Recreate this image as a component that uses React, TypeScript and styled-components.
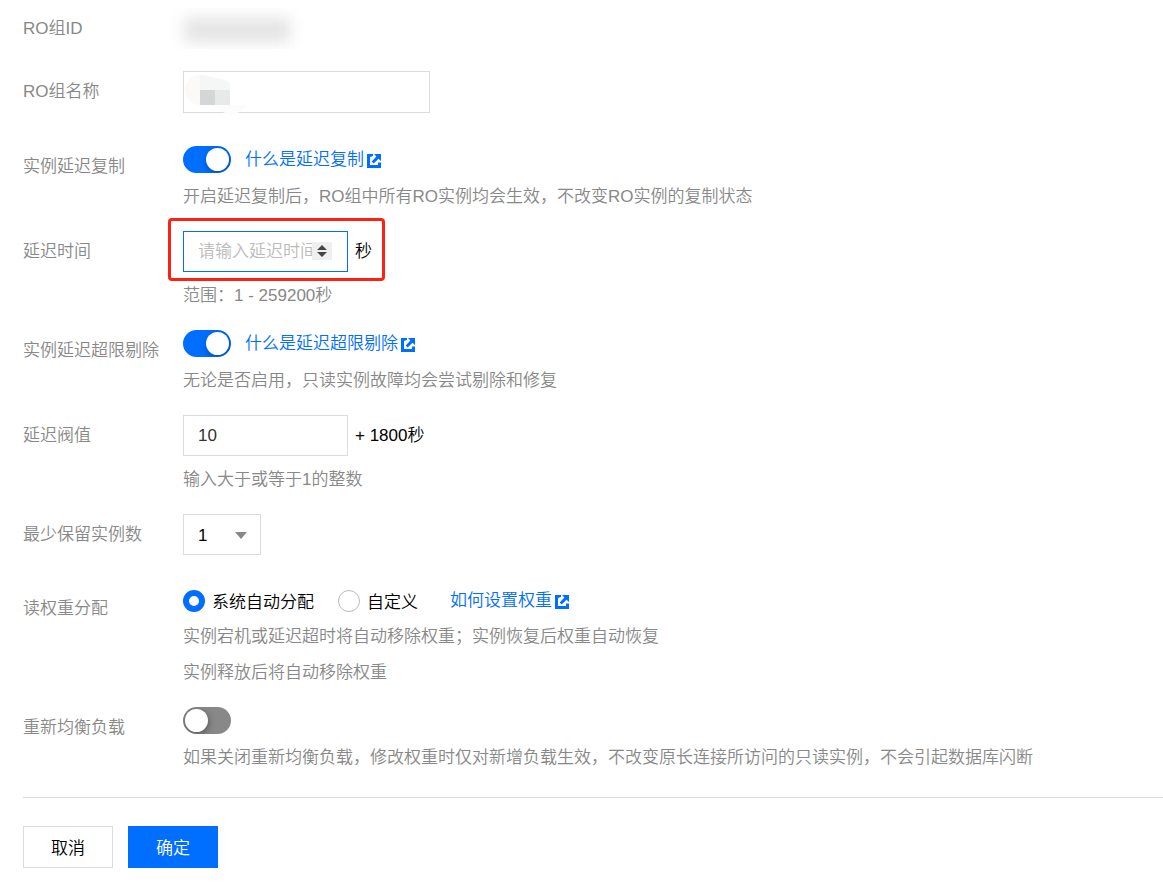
import React, { useState } from "react";
import styled, { createGlobalStyle, css } from "styled-components";

const blue = "#006eff";
const line = "#dcdcdc";
const grey = "#888888";

const GlobalStyle = createGlobalStyle`
  *, *::before, *::after { box-sizing: border-box; }
  body {
    margin: 0;
    background: #ffffff;
    color: #000000;
    font: 350 17px/24px "Liberation Sans", "Noto Sans CJK SC", sans-serif;
  }
  input, select, button { font: inherit; color: inherit; margin: 0; border-radius: 0; }
`;

const Form = styled.form`
  padding: 8px 0 21px 23px;
`;

const Field = styled.div`
  display: grid;
  grid-template-columns: 160px 1fr;
  margin-bottom: 22px;
`;

const Label = styled.label`
  padding-top: 9px;
  color: ${grey};
`;

const Content = styled.div<{ $plain?: boolean }>`
  display: flex;
  flex-direction: column;
  align-items: flex-start;
  gap: 12px;
  padding-bottom: ${(p) => (p.$plain ? 11 : 0)}px;
`;

const Controls = styled.div<{ $gap?: number }>`
  position: relative;
  display: flex;
  align-items: center;
  gap: ${(p) => p.$gap ?? 7}px;
`;

const Hints = styled.div`
  display: flex;
  flex-direction: column;
  gap: 12px;
`;

const Hint = styled.p`
  margin: 0;
  color: ${grey};
`;

const HiddenId = styled.div`
  width: 134px;
  height: 41px;
  margin-left: -13px;
  padding: 10px 14px;
  overflow: hidden;
  &::before {
    content: "";
    display: block;
    height: 24px;
    background: #e3e3e3;
    filter: blur(8px);
  }
`;

const TextInput = styled.input<{ $wide?: boolean; $active?: boolean }>`
  width: ${(p) => (p.$wide ? 247 : 165)}px;
  height: ${(p) => (p.$wide ? 42 : 41)}px;
  padding: 0 14px;
  border: 1px solid ${(p) => (p.$active ? blue : line)};
  background: #ffffff;
  color: #333333;
  outline: none;
  appearance: textfield;
  &::-webkit-inner-spin-button { appearance: none; margin: 0; }
  &::placeholder { color: #bbbbbb; opacity: 1; }
`;

const NumberBox = styled.div`
  position: relative;
  display: flex;
`;

const Spinner = styled.svg`
  position: absolute;
  top: 11px;
  right: 16px;
`;

const Mask = styled.svg`
  position: absolute;
  top: 4px;
  left: 1px;
  pointer-events: none;
`;

const Highlight = styled.div`
  position: absolute;
  inset: -13px -13px -9px -15px;
  border: 3px solid #ff2014;
  border-radius: 4px;
  pointer-events: none;
`;

const SwitchInput = styled.input`
  appearance: none;
  position: relative;
  width: 48px;
  height: 27px;
  border-radius: 14px;
  background: ${grey};
  cursor: pointer;
  overflow: hidden;
  &::before {
    content: "";
    position: absolute;
    top: 2px;
    left: 2px;
    width: 23px;
    height: 23px;
    border-radius: 50%;
    background: #ffffff;
    box-shadow: 1px 2px 6px rgba(0, 0, 0, 0.35);
  }
  &:checked { background: ${blue}; }
  &:checked::before { left: 23px; }
`;

const Link = styled.a`
  display: inline-flex;
  align-items: center;
  gap: 3px;
  color: ${blue};
  text-decoration: none;
`;

const LinkIcon = styled.svg`
  margin-top: 2px;
`;

const SelectBox = styled.div`
  position: relative;
  display: flex;
`;

const Select = styled.select`
  appearance: none;
  width: 78px;
  height: 41px;
  padding: 2px 14px 0;
  border: 1px solid ${line};
  background: #ffffff;
  outline: none;
`;

const Caret = styled.svg`
  position: absolute;
  top: 18px;
  right: 14px;
  pointer-events: none;
`;

const RadioRow = styled.div`
  display: flex;
  align-items: center;
  height: 25px;
`;

const RadioLabel = styled.label<{ $last?: boolean }>`
  display: flex;
  align-items: center;
  gap: 7px;
  margin-right: ${(p) => (p.$last ? 32 : 24)}px;
`;

const RadioText = styled.span`
  padding-top: 4px;
`;

const Radio = styled.input`
  appearance: none;
  width: 22px;
  height: 22px;
  border: 1px solid #bbbbbb;
  border-radius: 50%;
  background: #ffffff;
  &:checked { border: 6px solid ${blue}; }
`;

const Actions = styled.div`
  display: flex;
  gap: 15px;
  margin-top: 27px;
  padding-top: 28px;
  border-top: 1px solid ${line};
`;

const buttonColors = {
  plain: css`background: #ffffff; border-color: ${line};`,
  primary: css`background: ${blue}; border-color: ${blue}; color: #ffffff;`,
};

const Button = styled.button<{ $kind: "plain" | "primary" }>`
  height: 42px;
  padding: 4px 27px 0;
  border: 1px solid;
  cursor: pointer;
  ${(p) => buttonColors[p.$kind]}
`;

function HelpLink({ children }: { children: string }) {
  return (
    <Link href="#">
      {children}
      <LinkIcon width="14" height="14" viewBox="0 0 14 14" aria-hidden="true">
        <path d="M0 0H6V2L3 3V11H11V8.5H14V14H0Z" fill={blue} />
        <path d="M7 0H14V7L11.5 4.8L6.7 9.4L4.7 7.4L9.4 2.6Z" fill={blue} />
      </LinkIcon>
    </Link>
  );
}

function Switch({ id, on }: { id: string; on?: boolean }) {
  const [checked, setChecked] = useState(!!on);
  return <SwitchInput id={id} type="checkbox" role="switch" checked={checked} onChange={() => setChecked(!checked)} />;
}

export default function App() {
  return (
    <>
      <GlobalStyle />
      <Form onSubmit={(e) => e.preventDefault()}>
        <Field>
          <Label as="span">RO组ID</Label>
          <HiddenId />
        </Field>
        <Field>
          <Label htmlFor="name">RO组名称</Label>
          <Content $plain>
            <Controls>
              <TextInput id="name" type="text" $wide />
              <Mask width="64" height="40" aria-hidden="true">
                <path d="M16 0A15 15 0 0 0 16 30Z" fill="#fbfaf9" />
                <path d="M16 0Q24 0 32 3Q42 4 46 8V15H16Z" fill="#f5f7f7" />
                <path d="M16 15H31V30H16Z" fill="#d5d6d8" />
                <path d="M31 15H46V30H31Z" fill="#e8eaea" />
                <path d="M28 30H62Q57 39 47 39Q39 39 28 30Z" fill="#fcfcfc" />
              </Mask>
            </Controls>
          </Content>
        </Field>
        <Field>
          <Label htmlFor="replication">实例延迟复制</Label>
          <Content>
            <Controls $gap={14}>
              <Switch id="replication" on />
              <HelpLink>什么是延迟复制</HelpLink>
            </Controls>
            <Hint>开启延迟复制后，RO组中所有RO实例均会生效，不改变RO实例的复制状态</Hint>
          </Content>
        </Field>
        <Field>
          <Label htmlFor="delay">延迟时间</Label>
          <Content>
            <Controls>
              <NumberBox>
                <TextInput id="delay" type="number" placeholder="请输入延迟时间" $active />
                <Spinner width="20" height="18" aria-hidden="true">
                  <path d="M0 0H20V18H0Z" fill="#efefef" />
                  <path d="M10 3L15 8H5ZM10 15L15 10H5Z" fill="#444" />
                </Spinner>
              </NumberBox>
              <span>秒</span>
              <Highlight />
            </Controls>
            <Hint>范围：1 - 259200秒</Hint>
          </Content>
        </Field>
        <Field>
          <Label htmlFor="eject">实例延迟超限剔除</Label>
          <Content>
            <Controls $gap={14}>
              <Switch id="eject" on />
              <HelpLink>什么是延迟超限剔除</HelpLink>
            </Controls>
            <Hint>无论是否启用，只读实例故障均会尝试剔除和修复</Hint>
          </Content>
        </Field>
        <Field>
          <Label htmlFor="threshold">延迟阀值</Label>
          <Content>
            <Controls>
              <TextInput id="threshold" type="text" defaultValue="10" />
              <span>+ 1800秒</span>
            </Controls>
            <Hint>输入大于或等于1的整数</Hint>
          </Content>
        </Field>
        <Field>
          <Label htmlFor="minimum">最少保留实例数</Label>
          <Content $plain>
            <SelectBox>
              <Select id="minimum" defaultValue="1">
                <option>1</option>
              </Select>
              <Caret width="12" height="7" aria-hidden="true">
                <path d="M0 0H12L6 7Z" fill={grey} />
              </Caret>
            </SelectBox>
          </Content>
        </Field>
        <Field role="radiogroup" aria-labelledby="weight">
          <Label as="span" id="weight">读权重分配</Label>
          <Content>
            <RadioRow>
              <RadioLabel>
                <Radio type="radio" name="weight" defaultChecked />
                <RadioText>系统自动分配</RadioText>
              </RadioLabel>
              <RadioLabel $last>
                <Radio type="radio" name="weight" />
                <RadioText>自定义</RadioText>
              </RadioLabel>
              <HelpLink>如何设置权重</HelpLink>
            </RadioRow>
            <Hints>
              <Hint>实例宕机或延迟超时将自动移除权重；实例恢复后权重自动恢复</Hint>
              <Hint>实例释放后将自动移除权重</Hint>
            </Hints>
          </Content>
        </Field>
        <Field>
          <Label htmlFor="rebalance">重新均衡负载</Label>
          <Content>
            <Controls>
              <Switch id="rebalance" />
            </Controls>
            <Hint>如果关闭重新均衡负载，修改权重时仅对新增负载生效，不改变原长连接所访问的只读实例，不会引起数据库闪断</Hint>
          </Content>
        </Field>
        <Actions>
          <Button type="button" $kind="plain">取消</Button>
          <Button type="submit" $kind="primary">确定</Button>
        </Actions>
      </Form>
    </>
  );
}
